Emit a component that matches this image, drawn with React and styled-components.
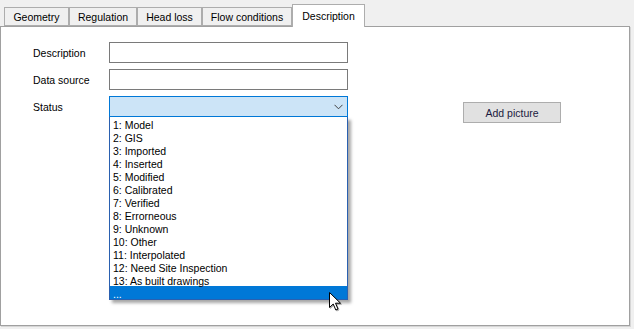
import React from "react";
import styled, { createGlobalStyle } from "styled-components";

const Global = createGlobalStyle`
  html, body { margin: 0; padding: 0; background: #f0f0f0; }
  body { font-family: "Liberation Sans", Arial, sans-serif; font-size: 10.5px; color: #000; }
  #root { width: 634px; height: 329px; overflow: hidden; }
`;

const Page = styled.div`
  position: relative;
  width: 634px;
  height: 329px;
  display: flex;
  flex-direction: column;
  background: #f0f0f0;
`;

const TabStrip = styled.div`
  display: flex;
  align-items: flex-end;
  height: 26px;
  padding-left: 4px;
  position: relative;
  z-index: 2;
`;

const Tab = styled.div`
  box-sizing: border-box;
  height: ${(p) => (p.$active ? "23px" : "19px")};
  width: ${(p) => p.$w}px;
  margin-bottom: ${(p) => (p.$active ? "-1px" : "0")};
  border: 1px solid #adadad;
  border-bottom: ${(p) => (p.$active ? "none" : "1px solid #adadad")};
  background: ${(p) => (p.$active ? "#ffffff" : "#f0f0f0")};
  display: flex;
  align-items: ${(p) => (p.$active ? "flex-start" : "center")};
  padding-top: ${(p) => (p.$active ? "5px" : "0")};
  justify-content: center;
  color: #000;
  white-space: nowrap;
  position: relative;
  z-index: ${(p) => (p.$active ? 2 : 1)};
`;

const Panel = styled.div`
  box-sizing: border-box;
  width: 630px;
  height: 300px;
  background: #fff;
  border: 1px solid #a0a0a0;
  box-shadow: 1px 1px 0 #d6d6d6;
  padding: 15px 0 0 32px;
  display: flex;
  align-items: flex-start;
  position: relative;
  z-index: 1;
`;

const FieldGrid = styled.div`
  display: grid;
  grid-template-columns: 76px 239px;
  grid-auto-rows: 21px;
  row-gap: 6px;
  align-items: center;
`;

const Label = styled.div`
  line-height: 13px;
  margin-top: 1px;
`;

const TextBox = styled.div`
  box-sizing: border-box;
  height: 21px;
  border: 1px solid #7a7a7a;
  background: #fff;
`;

const ComboWrap = styled.div`
  position: relative;
  height: 21px;
`;

const Combo = styled.div`
  box-sizing: border-box;
  height: 21px;
  border: 1px solid #0078d7;
  background: #cce4f7;
  display: flex;
  align-items: center;
  justify-content: flex-end;
  padding-right: 4px;
`;

const DropList = styled.div`
  position: absolute;
  top: 100%;
  left: 0;
  width: 239px;
  box-sizing: border-box;
  border: 1px solid #2a60b0;
  border-top: none;
  background: #fff;
  box-shadow: 3px 3px 3px rgba(0, 0, 0, 0.35);
  z-index: 5;
`;

const Item = styled.div`
  box-sizing: border-box;
  height: 13px;
  line-height: 13px;
  padding: 2px 0 0 3px;
  white-space: nowrap;
  background: ${(p) => (p.$selected ? "#0078d7" : "transparent")};
  color: ${(p) => (p.$selected ? "#fff" : "#000")};
`;

const Button = styled.div`
  box-sizing: border-box;
  width: 98px;
  height: 21px;
  margin: 60px 0 0 115px;
  border: 1px solid #adadad;
  background: #e1e1e1;
  display: flex;
  align-items: center;
  justify-content: center;
  color: #1a1a40;
  padding-top: 1px;
`;

const Cursor = styled.svg`
  position: absolute;
  left: 329px;
  top: 292px;
  z-index: 10;
  filter: drop-shadow(1px 1px 0.5px rgba(0,0,0,0.3));
`;

const tabs = [
  { label: "Geometry", w: 65 },
  { label: "Regulation", w: 68 },
  { label: "Head loss", w: 65 },
  { label: "Flow conditions", w: 90 },
  { label: "Description", w: 73, active: true },
];

const items = [
  "1: Model",
  "2: GIS",
  "3: Imported",
  "4: Inserted",
  "5: Modified",
  "6: Calibrated",
  "7: Verified",
  "8: Errorneous",
  "9: Unknown",
  "10: Other",
  "11: Interpolated",
  "12: Need Site Inspection",
  "13: As built drawings",
  "...",
];

export default function App() {
  return (
    <Page>
      <Global />
      <TabStrip>
        {tabs.map((t) => (
          <Tab key={t.label} $w={t.w} $active={t.active}>
            {t.label}
          </Tab>
        ))}
      </TabStrip>
      <Panel>
        <FieldGrid>
          <Label>Description</Label>
          <TextBox />
          <Label>Data source</Label>
          <TextBox />
          <Label>Status</Label>
          <ComboWrap>
            <Combo>
              <svg width="9" height="6" viewBox="0 0 9 6">
                <path d="M0.5 0.8 L4.5 4.8 L8.5 0.8" fill="none" stroke="#404040" strokeWidth="1" />
              </svg>
            </Combo>
            <DropList>
              {items.map((it) => (
                <Item key={it} $selected={it === "..."}>
                  {it}
                </Item>
              ))}
            </DropList>
          </ComboWrap>
        </FieldGrid>
        <Button>Add picture</Button>
      </Panel>
      <Cursor width="13" height="20" viewBox="0 0 13 20">
        <path d="M0.5 0.5 L0.5 15.5 L4.2 12 L6.8 18 L9 17 L6.5 11.2 L11.5 11.2 Z" fill="#fff" stroke="#000" strokeWidth="1" strokeLinejoin="miter" />
      </Cursor>
    </Page>
  );
}
